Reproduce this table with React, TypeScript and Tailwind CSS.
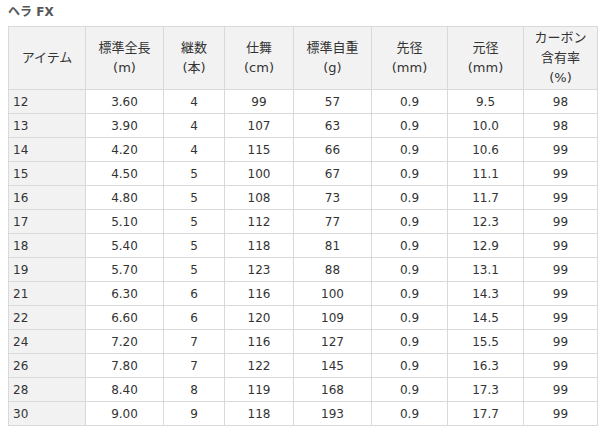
const cols = ["w-[77px]", "w-[78px]", "w-[61px]", "w-[69px]", "w-[78px]", "w-[76px]", "w-[76px]", "w-[74px]"];

const headers: string[][] = [
  ["アイテム"],
  ["標準全長", "(m)"],
  ["継数", "(本)"],
  ["仕舞", "(cm)"],
  ["標準自重", "(g)"],
  ["先径", "(mm)"],
  ["元径", "(mm)"],
  ["カーボン", "含有率", "(%)"],
];

const rows: string[][] = [
  ["12", "3.60", "4", "99", "57", "0.9", "9.5", "98"],
  ["13", "3.90", "4", "107", "63", "0.9", "10.0", "98"],
  ["14", "4.20", "4", "115", "66", "0.9", "10.6", "99"],
  ["15", "4.50", "5", "100", "67", "0.9", "11.1", "99"],
  ["16", "4.80", "5", "108", "73", "0.9", "11.7", "99"],
  ["17", "5.10", "5", "112", "77", "0.9", "12.3", "99"],
  ["18", "5.40", "5", "118", "81", "0.9", "12.9", "99"],
  ["19", "5.70", "5", "123", "88", "0.9", "13.1", "99"],
  ["21", "6.30", "6", "116", "100", "0.9", "14.3", "99"],
  ["22", "6.60", "6", "120", "109", "0.9", "14.5", "99"],
  ["24", "7.20", "7", "116", "127", "0.9", "15.5", "99"],
  ["26", "7.80", "7", "122", "145", "0.9", "16.3", "99"],
  ["28", "8.40", "8", "119", "168", "0.9", "17.3", "99"],
  ["30", "9.00", "9", "118", "193", "0.9", "17.7", "99"],
];

export default function App() {
  return (
    <div className="w-[603px] h-[431px] bg-white px-2 pt-[4px] text-[#333] font-['DejaVu_Sans','Noto_Sans_CJK_JP',sans-serif] overflow-hidden">
      <h2 className="text-[12px] leading-[16px] font-bold text-[#555] h-[22px]">ヘラ FX</h2>

      <table className="border-collapse table-fixed w-[589px]">
        <colgroup>
          {cols.map((c, i) => (
            <col key={i} className={c} />
          ))}
        </colgroup>
        <thead>
          <tr className="bg-[#f2f2f2]">
            {headers.map((h, i) => (
              <th
                key={i}
                className="border border-[#d9d9d9] h-[63px] p-0 text-center align-middle font-normal text-[13px] leading-[20px]"
              >
                {h.map((line, j) => (
                  <div key={j}>{line}</div>
                ))}
              </th>
            ))}
          </tr>
        </thead>
        <tbody>
          {rows.map((r, i) => (
            <tr key={i}>
              {r.map((v, j) => (
                <td
                  key={j}
                  className={
                    j === 0
                      ? "border border-[#d9d9d9] h-[24px] p-0 pl-[4px] bg-[#f2f2f2] text-left text-[12px] leading-[16px]"
                      : "border border-[#d9d9d9] h-[24px] p-0 text-center text-[12px] leading-[16px]"
                  }
                >
                  {v}
                </td>
              ))}
            </tr>
          ))}
        </tbody>
      </table>
    </div>
  );
}
